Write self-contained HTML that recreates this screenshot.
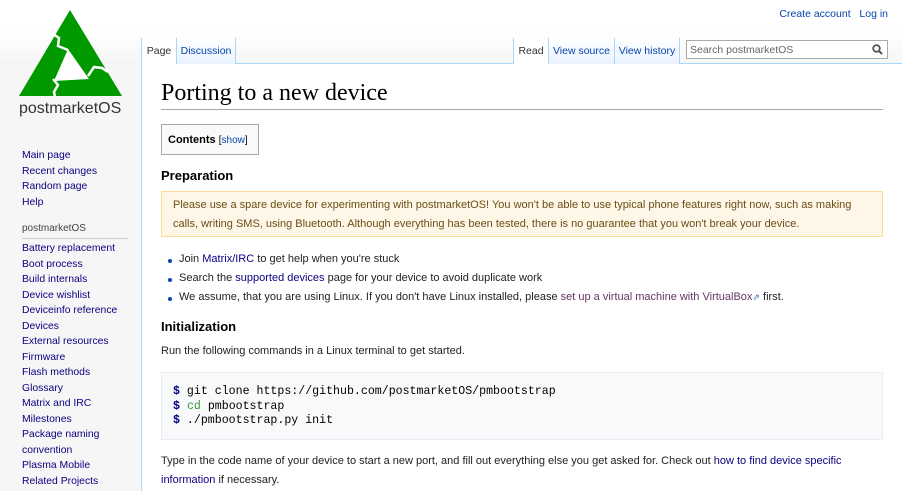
<!DOCTYPE html>
<html><head><meta charset="utf-8"><style>
*{margin:0;padding:0;box-sizing:border-box}
body{width:902px;height:491px;overflow:hidden;background:#f6f6f6;font-family:"Liberation Sans",sans-serif;position:relative}
a{color:#0645ad;text-decoration:none}
.abs{position:absolute;white-space:nowrap}
#hdr{position:absolute;left:0;top:0;width:902px;height:63px;background:linear-gradient(#fff 0,#fff 30px,#f6f6f6 63px)}
#content{position:absolute;left:141px;top:63px;width:761px;height:428px;background:#fff;border-left:1px solid #a7d7f9;border-top:1px solid #a7d7f9}
.side{font-size:10.4px;line-height:15.5px;color:#0645ad}
.side a{display:block;color:#0b0080}
.tab{position:absolute;top:38px;height:26px;font-size:10.5px;padding:7px 0 0;text-align:center;background:linear-gradient(#fff,#eaf3ff);border-right:1px solid #a7d7f9}
.tab.sel{background:#fff}
.txt{font-size:11px;color:#222}
h2{position:absolute;font-size:13px;font-weight:bold;color:#000}
ul{list-style:none}
li{position:relative;padding-left:18px;height:19px;line-height:19px}
li:before{content:"";position:absolute;left:7px;top:9px;width:4px;height:4px;background:#0645ad;border-radius:50%}
</style></head><body>
<div id="hdr"></div>
<div class="abs" style="right:14px;top:8px;font-size:10.5px"><a>Create account</a>&nbsp;&nbsp; <a>Log in</a></div>
<svg class="abs" style="left:0;top:0" width="140" height="100" viewBox="0 0 140 100">
<polygon points="70,10 122,96 19,96" fill="#009900"/>
<polygon points="68,49 54,81 89,79" fill="#fff"/>
<path d="M53,34 L59,38 L58,46 L68,50" fill="none" stroke="#fff" stroke-width="2.5"/>
<path d="M88,76 L94,67 L102,68 L108,72" fill="none" stroke="#fff" stroke-width="2.5"/>
<path d="M53,79 L58,85 L54,92 L55,97" fill="none" stroke="#fff" stroke-width="2.5"/>
</svg>
<div class="abs" style="left:19px;top:100px;font-size:16px;color:#333">postmarketOS</div>
<div class="abs side" style="left:22px;top:148px"><a>Main page</a><a>Recent changes</a><a>Random page</a><a>Help</a></div>
<div class="abs" style="left:22px;top:223px;font-size:10px;color:#444">postmarketOS</div>
<div class="abs" style="left:22px;top:238px;width:106px;height:1px;background:#ccc"></div>
<div class="abs side" style="left:22px;top:241px"><a>Battery replacement</a><a>Boot process</a><a>Build internals</a><a>Device wishlist</a><a>Deviceinfo reference</a><a>Devices</a><a>External resources</a><a>Firmware</a><a>Flash methods</a><a>Glossary</a><a>Matrix and IRC</a><a>Milestones</a><a>Package naming<br>convention</a><a>Plasma Mobile</a><a>Related Projects</a></div>
<div id="content"></div>
<div class="tab sel" style="left:141px;width:36px;color:#333;border-left:1px solid #a7d7f9">Page</div>
<div class="tab" style="left:177px;width:59px"><a>Discussion</a></div>
<div class="tab sel" style="left:513px;width:36px;color:#333;border-left:1px solid #a7d7f9">Read</div>
<div class="tab" style="left:549px;width:66px"><a>View source</a></div>
<div class="tab" style="left:615px;width:65px"><a>View history</a></div>
<div class="abs" style="left:686px;top:40px;width:202px;height:19px;border:1px solid #aaa;background:#fff;font-size:10.5px;color:#666;padding:3px 3px">Search postmarketOS
<svg style="position:absolute;right:4px;top:3px" width="11" height="11"><circle cx="4.5" cy="4.5" r="3.3" fill="none" stroke="#555" stroke-width="1.8"/><path d="M7,7 L10,10" stroke="#555" stroke-width="2"/></svg></div>
<div class="abs" style="left:161px;top:80px;font-family:'Liberation Serif',serif;font-size:24px;color:#000">Porting to a new device</div>
<div class="abs" style="left:161px;top:109px;width:722px;height:1px;background:#a2a9b1"></div>
<div class="abs" style="left:161px;top:124px;width:98px;height:31px;border:1px solid #a2a9b1;background:#f9f9f9;font-size:11px;padding:9px 6px"><b>Contents</b> <span style="font-size:10px">[<a>show</a>]</span></div>
<h2 style="left:161px;top:168px">Preparation</h2>
<div class="abs txt" style="left:161px;top:191px;width:722px;height:46px;background:#fef6e7;border:1px solid #fcdc92;color:#6b4e16;padding:4px 11px;line-height:19px;white-space:normal">Please use a spare device for experimenting with postmarketOS! You won't be able to use typical phone features right now, such as making calls, writing SMS, using Bluetooth. Although everything has been tested, there is no guarantee that you won't break your device.</div>
<ul class="abs txt" style="left:161px;top:250px">
<li>Join <a style="color:#0b0080">Matrix/IRC</a> to get help when you're stuck</li>
<li>Search the <a style="color:#0b0080">supported devices</a> page for your device to avoid duplicate work</li>
<li>We assume, that you are using Linux. If you don't have Linux installed, please <a style="color:#663366">set up a virtual machine with VirtualBox</a><span style="color:#36b;font-size:9px">⇗</span> first.</li>
</ul>
<h2 style="left:161px;top:319px">Initialization</h2>
<div class="abs txt" style="left:161px;top:345px">Run the following commands in a Linux terminal to get started.</div>
<div class="abs" style="left:161px;top:372px;width:722px;height:68px;background:#f8f9fa;border:1px solid #eaecf0;font-family:'Liberation Mono',monospace;font-size:11.6px;line-height:14.5px;padding:12px 11px;color:#000">
<b style="color:#000080">$</b> git clone https://github.com/postmarketOS/pmbootstrap<br><b style="color:#000080">$</b> <span style="color:#3a9a3a">cd</span> pmbootstrap<br><b style="color:#000080">$</b> ./pmbootstrap.py init</div>
<div class="abs txt" style="left:161px;top:452px;line-height:19px;width:722px;white-space:normal">Type in the code name of your device to start a new port, and fill out everything else you get asked for. Check out <a style="color:#0b0080">how to find device specific information</a> if necessary.</div>
</body></html>
